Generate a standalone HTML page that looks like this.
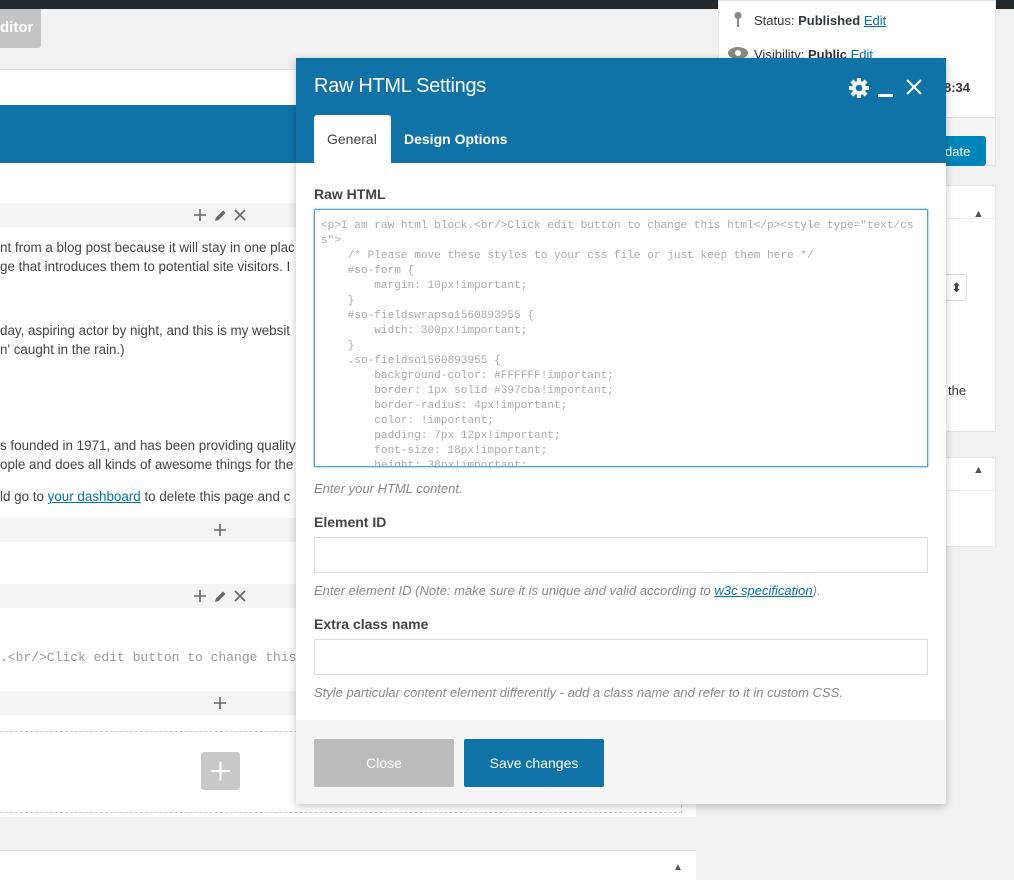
<!DOCTYPE html>
<html><head><meta charset="utf-8">
<style>
*{box-sizing:border-box;margin:0;padding:0}
body{width:1014px;height:880px;overflow:hidden;background:#f1f1f1;font-family:"Liberation Sans",sans-serif;position:relative;color:#32373c}
.abs{position:absolute}
.row{position:absolute;left:0;width:696px;height:24px;background:#f4f4f4}
.txt{position:absolute;left:0;font-size:13.4px;color:#444;white-space:nowrap}
.mono{font-family:"Liberation Mono",monospace}
.lbl{position:absolute;left:18px;font-size:14px;font-weight:bold;color:#444}
.hint{position:absolute;left:18px;font-size:13px;font-style:italic;color:#888}
.inp{position:absolute;left:18px;width:614px;height:36px;border:1px solid #ddd;background:#fff}
</style></head><body>
<svg width="0" height="0" style="position:absolute"><defs>
<g id="pl"><path d="M1 7H13M7 1V13" stroke="#666" stroke-width="1.6"/></g>
<g id="pe"><path d="M2 13L3 9.5L10 2.5L12.5 5L5.5 12Z" fill="#666"/></g>
<g id="xx"><path d="M2 2L12 12M12 2L2 12" stroke="#666" stroke-width="1.6"/></g>
</defs></svg>
<div class="abs" style="left:0;top:0;width:1014px;height:9px;background:#23282d"></div>
<div class="abs" style="left:0;top:9px;width:41px;height:39px;background:#c4c4c4;border-radius:0 0 3px 0;color:#fff;font-weight:bold;font-size:15px;padding:10px 0 0 0">ditor</div>

<div class="abs" style="left:0;top:69px;width:696px;height:36px;background:#fff;border-top:1px solid #ddd"></div>
<div class="abs" style="left:0;top:105px;width:696px;height:58px;background:#0f73a8"></div>
<div class="abs" style="left:0;top:163px;width:696px;height:654px;background:#fff"></div>
<div class="row" style="top:203px"></div>
<svg class="abs" style="left:193px;top:208px" width="60" height="14"><use href="#pl"/><use href="#pe" x="20"/><use href="#xx" x="40"/></svg>
<div class="txt" style="top:240px">nt from a blog post because it will stay in one plac</div>
<div class="txt" style="top:259px">ge that introduces them to potential site visitors. I</div>
<div class="txt" style="top:323px">day, aspiring actor by night, and this is my websit</div>
<div class="txt" style="top:342px">n' caught in the rain.)</div>
<div class="txt" style="top:438px">s founded in 1971, and has been providing quality</div>
<div class="txt" style="top:457px">ople and does all kinds of awesome things for the</div>
<div class="txt" style="top:489px">ld go to <span style="color:#0073aa;text-decoration:underline">your dashboard</span> to delete this page and c</div>
<div class="row" style="top:518px"></div>
<svg class="abs" style="left:213px;top:523px" width="14" height="14"><use href="#pl"/></svg>
<div class="row" style="top:584px"></div>
<svg class="abs" style="left:193px;top:589px" width="60" height="14"><use href="#pl"/><use href="#pe" x="20"/><use href="#xx" x="40"/></svg>
<div class="txt mono" style="top:650px;color:#999;font-size:13px">.&lt;br/&gt;Click edit button to change this</div>
<div class="row" style="top:691px"></div>
<svg class="abs" style="left:213px;top:696px" width="14" height="14"><use href="#pl"/></svg>
<div class="abs" style="left:0;top:731px;width:682px;height:82px;border:1px dashed #ccc;border-left:none"></div>
<div class="abs" style="left:201px;top:752px;width:39px;height:38px;background:#c8c8c8;border-radius:3px"><svg width="39" height="38"><path d="M10 19H29M19.5 9.5V28.5" stroke="#fff" stroke-width="2"/></svg></div>
<div class="abs" style="left:0;top:850px;width:696px;height:30px;background:#fff;border-top:1px solid #ddd"></div>
<div class="abs" style="left:673px;top:862px;font-size:10px;color:#555">▲</div>

<div class="abs" style="left:718px;top:0;width:278px;height:166px;background:#fff;border:1px solid #e5e5e5"></div>
<svg class="abs" style="left:733px;top:11px" width="10" height="17"><circle cx="5" cy="4.5" r="3.5" fill="#888"/><path d="M5 7V16" stroke="#888" stroke-width="2"/></svg>
<div class="abs" style="left:754px;top:13px;font-size:13px">Status: <b>Published</b> <span style="color:#0073aa;text-decoration:underline">Edit</span></div>
<svg class="abs" style="left:727px;top:46px" width="22" height="14"><ellipse cx="11" cy="7" rx="10" ry="6" fill="#888"/><circle cx="11" cy="7" r="3" fill="#fff"/></svg>
<div class="abs" style="left:754px;top:47px;font-size:13px">Visibility: <b>Public</b> <span style="color:#0073aa">Edit</span></div>
<div class="abs" style="left:944px;top:80px;font-size:13px;font-weight:bold">8:34</div>
<div class="abs" style="left:719px;top:117px;width:276px;height:48px;background:#f5f5f5;border-top:1px solid #ddd"></div>
<div class="abs" style="left:925px;top:136px;width:61px;height:30px;background:#0085ba;border-radius:3px;color:#fff;font-size:13px;padding:8px 0 0 20px">date</div>
<div class="abs" style="left:718px;top:185px;width:278px;height:247px;background:#fff;border:1px solid #e5e5e5"></div>
<div class="abs" style="left:719px;top:218px;width:276px;height:1px;background:#eee"></div>
<div class="abs" style="left:973px;top:208px;font-size:11px;color:#555">▲</div>
<div class="abs" style="left:940px;top:274px;width:27px;height:27px;border:1px solid #ddd;border-radius:4px;background:#fff;font-size:13px;padding:5px 0 0 10px;color:#444">⬍</div>
<div class="abs" style="left:948px;top:383px;font-size:13px">the</div>
<div class="abs" style="left:718px;top:457px;width:278px;height:90px;background:#fff;border:1px solid #e5e5e5"></div>
<div class="abs" style="left:719px;top:490px;width:276px;height:1px;background:#eee"></div>
<div class="abs" style="left:973px;top:464px;font-size:11px;color:#555">▲</div>

<div class="abs" style="left:296px;top:58px;width:650px;height:746px;background:#fff;box-shadow:0 2px 8px rgba(0,0,0,.25)">
 <div class="abs" style="left:0;top:0;width:650px;height:105px;background:#0f73a8"></div>
 <div class="abs" style="left:18px;top:17px;font-size:20px;color:#fff;letter-spacing:-0.3px">Raw HTML Settings</div>
 <svg class="abs" style="left:553px;top:20px" width="20" height="20" viewBox="0 0 20 20"><g fill="#fff"><circle cx="10" cy="10" r="7"/><rect x="8" y="0" width="4" height="20"/><rect x="0" y="8" width="20" height="4"/><rect x="8" y="0" width="4" height="20" transform="rotate(45 10 10)"/><rect x="8" y="0" width="4" height="20" transform="rotate(-45 10 10)"/></g><circle cx="10" cy="10" r="3.3" fill="#0f73a8"/></svg>
 <div class="abs" style="left:582px;top:36px;width:15px;height:3px;background:#fff"></div>
 <svg class="abs" style="left:610px;top:21px" width="16" height="16"><path d="M1 1L15 15M15 1L1 15" stroke="#fff" stroke-width="2"/></svg>
 <div class="abs" style="left:18px;top:57px;width:77px;height:48px;background:#fff;border-radius:3px 3px 0 0;font-size:14px;color:#444;padding:16px 0 0 13px">General</div>
 <div class="abs" style="left:108px;top:73px;font-size:14px;color:#fff;font-weight:bold">Design Options</div>

 <div class="lbl" style="top:128px">Raw HTML</div>
 <div class="abs mono" style="left:18px;top:151px;width:614px;height:258px;border:1px solid #5b9dd9;box-shadow:0 0 2px rgba(30,140,190,.8);overflow:hidden;font-size:11.1px;line-height:15px;color:#aaa;padding:9px 6px;white-space:pre">&lt;p&gt;I am raw html block.&lt;br/&gt;Click edit button to change this html&lt;/p&gt;&lt;style type="text/cs
s"&gt;
    /* Please move these styles to your css file or just keep them here */
    #so-form {
        margin: 10px!important;
    }
    #so-fieldswrapso1560893955 {
        width: 300px!important;
    }
    .so-fieldso1560893955 {
        background-color: #FFFFFF!important;
        border: 1px solid #397cba!important;
        border-radius: 4px!important;
        color: !important;
        padding: 7px 12px!important;
        font-size: 18px!important;
        height: 38px!important;</div>
 <div class="hint" style="top:423px">Enter your HTML content.</div>
 <div class="lbl" style="top:456px">Element ID</div>
 <div class="inp" style="top:479px"></div>
 <div class="hint" style="top:525px">Enter element ID (Note: make sure it is unique and valid according to <span style="color:#0073aa;text-decoration:underline">w3c specification</span>).</div>
 <div class="lbl" style="top:558px">Extra class name</div>
 <div class="inp" style="top:581px"></div>
 <div class="hint" style="top:627px">Style particular content element differently - add a class name and refer to it in custom CSS.</div>
 <div class="abs" style="left:0;top:662px;width:650px;height:84px;background:#f4f4f4"></div>
 <div class="abs" style="left:18px;top:681px;width:140px;height:48px;background:#bbb;border-radius:2px;color:#fff;font-size:14px;text-align:center;line-height:48px">Close</div>
 <div class="abs" style="left:168px;top:681px;width:140px;height:48px;background:#0f73a8;border-radius:2px;color:#fff;font-size:14px;text-align:center;line-height:48px">Save changes</div>
</div>
</body></html>
